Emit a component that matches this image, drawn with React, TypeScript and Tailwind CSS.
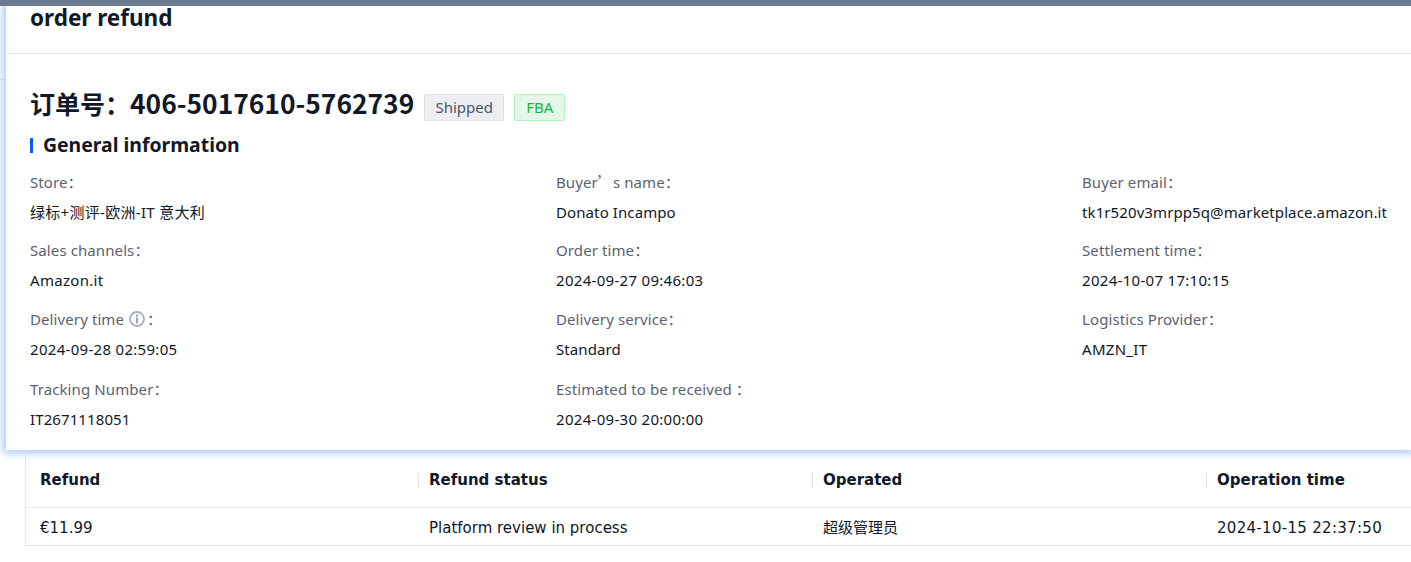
import React from 'react';

const bodyFont = '"Noto Sans", "Noto Sans CJK SC", sans-serif';

const fields = [
  [
    { label: 'Store：', value: '绿标+测评-欧洲-IT 意大利', wide: true },
    { label: <>Buyer<span style={{ fontFamily: '"Noto Sans CJK SC", sans-serif' }}>’</span>s name：</>, value: 'Donato Incampo' },
    { label: 'Buyer email：', value: 'tk1r520v3mrpp5q@marketplace.amazon.it' },
  ],
  [
    { label: 'Sales channels：', value: 'Amazon.it', wide: true },
    { label: 'Order time：', value: '2024-09-27 09:46:03', wide: true },
    { label: 'Settlement time：', value: '2024-10-07 17:10:15', wide: true },
  ],
  [
    { label: 'Delivery time', value: '2024-09-28 02:59:05', info: true, wide: true },
    { label: 'Delivery service：', value: 'Standard' },
    { label: 'Logistics Provider：', value: 'AMZN_IT', wide: true },
  ],
  [
    { label: 'Tracking Number：', value: 'IT2671118051' },
    { label: 'Estimated to be received ：', value: '2024-09-30 20:00:00', wide: true },
  ],
];

const rowClasses = ['h-[68px]', 'h-[69px]', 'h-[70px]', 'h-[60px]'];

const InfoIcon = () => (
  <svg width="16" height="16" viewBox="0 0 16 16" fill="none" className="ml-[5px]">
    <circle cx="8" cy="8" r="7" stroke="#a9b0bd" strokeWidth="1.8" />
    <rect x="7" y="3.6" width="2" height="2" fill="#98a0ae" />
    <rect x="7" y="6.5" width="2" height="5.8" fill="#98a0ae" />
  </svg>
);

const App: React.FC = () => {
  return (
    <div className="relative h-[562px] w-[1411px] overflow-hidden bg-white" style={{ fontFamily: bodyFont }}>
      <div className="relative z-20 h-[6px] bg-[#6b7a90]" />

      <div className="flex">
        <div className="mt-[73px] h-px w-[6px] bg-[#e4e7ec]" />
        <div className="relative z-10 h-[444px] w-[1405px] bg-white shadow-[0_0_8px_3px_#a6cbff]">
          <div className="h-[48px] border-b border-[#e6e8eb] pl-6">
            <h2 className="text-[22.5px] leading-[24px] font-bold text-[#111827]">order refund</h2>
          </div>

          <div className="pl-6">
            <div className="mt-[31px] flex h-[40px] items-center">
              <h1 className="leading-[40px] font-bold whitespace-nowrap text-[#111827]" style={{ fontFamily: '"Noto Sans CJK SC", sans-serif' }}>
                <span className="text-[25px]">订单号：</span>
                <span className="text-[26.4px]">406-5017610-5762739</span>
              </h1>
              <span className="mt-[4px] ml-[10px] flex h-[27px] w-[80px] items-center justify-center rounded-[2px] border border-[#dcdfe6] bg-[#eceef2] text-[15px] text-[#4b5563]">
                Shipped
              </span>
              <span className="mt-[4px] ml-[10px] flex h-[27px] w-[51px] items-center justify-center rounded-[2px] border border-[#b4efc0] bg-[#e5f7e9] text-[15px] text-[#16b33f]">
                FBA
              </span>
            </div>

            <div className="mt-[8px] flex h-[24px] items-center">
              <div className="h-[15px] w-[3px] bg-[#0b5cff]" />
              <h3 className="ml-[10px] text-[19.4px] leading-[24px] font-bold text-[#111827]">General information</h3>
            </div>

            <div className="mt-[15px]">
              {fields.map((row, i) => (
                <div key={i} className={`flex ${rowClasses[i]}`}>
                  {row.map((f) => (
                    <div key={f.value} className="w-[526px] shrink-0">
                      <div className="flex h-[20px] items-center text-[15px] leading-[20px] tracking-[0.1px] whitespace-pre text-[#5b6270]">
                        <span>{f.label}</span>
                        {f.info && <InfoIcon />}
                        {f.info && <span className="ml-[2px]">：</span>}
                      </div>
                      <div className={`mt-[10px] text-[15px] leading-[20px] whitespace-nowrap text-[#111827] ${f.wide ? 'tracking-[0.3px]' : 'tracking-[0.1px]'}`}>
                        {f.value}
                      </div>
                    </div>
                  ))}
                </div>
              ))}
            </div>
          </div>
        </div>
      </div>

      <div
        className="mt-[2px] ml-[25px] w-[1386px] rounded-t-[4px] border border-r-0 border-[#e6e8eb] text-[15px] text-[#111827]"
        style={{ fontFamily: '"DejaVu Sans", "Noto Sans CJK SC", sans-serif' }}
      >
        <div className="flex h-[55px] items-center border-b border-[#e6e8eb] font-bold">
          <div className="w-[393px] pl-[14px]">
            <div className="border-r border-[#e2e4e8] leading-[15px]">Refund</div>
          </div>
          <div className="w-[394px] pl-[10px]">
            <div className="border-r border-[#e2e4e8] leading-[15px]">Refund status</div>
          </div>
          <div className="w-[394px] pl-[10px]">
            <div className="border-r border-[#e2e4e8] leading-[15px]">Operated</div>
          </div>
          <div className="pl-[10px] leading-[15px]">Operation time</div>
        </div>
        <div className="flex h-[37px] items-center pt-[3px]">
          <div className="w-[393px] pl-[14px]">€11.99</div>
          <div className="w-[394px] pl-[10px]">Platform review in process</div>
          <div className="w-[394px] pl-[10px]">超级管理员</div>
          <div className="pl-[10px] tracking-[0.3px]">2024-10-15 22:37:50</div>
        </div>
      </div>
    </div>
  );
};

export default App;
